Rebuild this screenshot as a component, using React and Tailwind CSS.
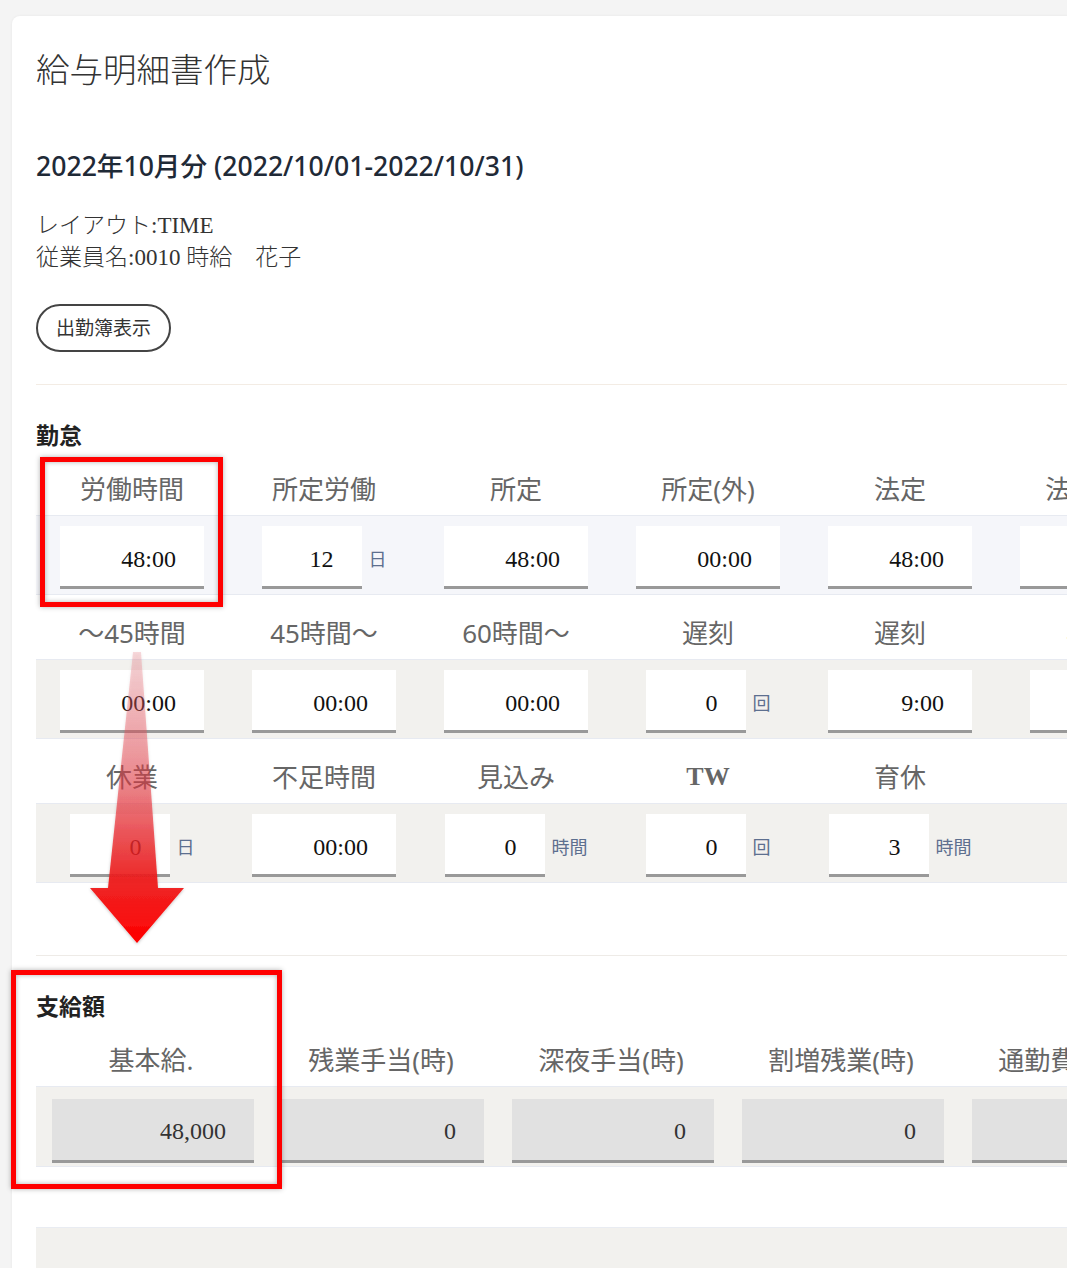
const SANS = "font-['Noto_Sans','Noto_Sans_CJK_JP',sans-serif]";
const SERIF = "font-['Liberation_Serif','Noto_Sans_CJK_JP',serif]";

const attendance = [
  {
    bg: "bg-[#f5f6fa]",
    cells: [
      { label: "労働時間", value: "48:00" },
      { label: "所定労働", value: "12", unit: "日" },
      { label: "所定", value: "48:00" },
      { label: "所定(外)", value: "00:00" },
      { label: "法定", value: "48:00" },
      { label: "法定(外)", value: "00:00" },
    ],
  },
  {
    bg: "bg-[#f2f1ee]",
    cells: [
      { label: "～45時間", value: "00:00" },
      { label: "45時間～", value: "00:00" },
      { label: "60時間～", value: "00:00" },
      { label: "遅刻", value: "0", unit: "回" },
      { label: "遅刻", value: "9:00" },
      { label: "早退", value: "0", unit: "回" },
    ],
  },
  {
    bg: "bg-[#f2f1ee]",
    cells: [
      { label: "休業", value: "0", unit: "日" },
      { label: "不足時間", value: "00:00" },
      { label: "見込み", value: "0", unit: "時間" },
      { label: "TW", value: "0", unit: "回", serifLabel: true },
      { label: "育休", value: "3", unit: "時間" },
    ],
  },
];

const payments = [
  { label: "基本給.", value: "48,000" },
  { label: "残業手当(時)", value: "0" },
  { label: "深夜手当(時)", value: "0" },
  { label: "割増残業(時)", value: "0" },
  { label: "通勤費(課税)", value: "0" },
];

function ValueBox({ value, narrow }) {
  return (
    <div
      className={`${narrow ? "w-[100px]" : "w-[144px]"} flex h-[63px] items-center justify-end border-b-[3px] border-[#999] bg-white pr-7 pt-[6px] ${SERIF} text-[24px] text-[#111]`}
    >
      {value}
    </div>
  );
}

function AttendanceRow({ row }) {
  return (
    <div>
      <div className="flex h-[64px]">
        {row.cells.map((c, i) => (
          <div
            key={i}
            className={`w-[192px] shrink-0 pt-[23px] text-center text-[26px] leading-[30px] text-[#666] ${
              c.serifLabel ? "font-['Liberation_Serif',serif] font-bold" : SANS
            }`}
          >
            {c.label}
          </div>
        ))}
      </div>
      <div className={`flex h-[80px] border-y border-[#e7eaf1] pt-[10px] ${row.bg}`}>
        {row.cells.map((c, i) => (
          <div key={i} className="flex w-[192px] shrink-0 items-start justify-center">
            {c.unit ? (
              <div className="flex items-center gap-[7px]">
                <ValueBox value={c.value} narrow />
                <span className={`${SANS} pt-[4px] text-[18px] text-[#5d6f8f]`}>{c.unit}</span>
              </div>
            ) : (
              <ValueBox value={c.value} />
            )}
          </div>
        ))}
      </div>
    </div>
  );
}

function Arrow() {
  return (
    <svg
      className="pointer-events-none absolute left-[80px] top-[640px]"
      width="120"
      height="310"
      viewBox="0 0 120 310"
    >
      <defs>
        <linearGradient id="shaft" x1="0" y1="12" x2="0" y2="303" gradientUnits="userSpaceOnUse">
          <stop offset="0" stopColor="#e8707a" stopOpacity="0.25" />
          <stop offset="0.45" stopColor="#e83a44" stopOpacity="0.55" />
          <stop offset="0.78" stopColor="#ee1a1a" stopOpacity="0.92" />
          <stop offset="1" stopColor="#ff0000" stopOpacity="1" />
        </linearGradient>
        <filter id="sh" x="-20%" y="-10%" width="140%" height="120%">
          <feDropShadow dx="0" dy="1" stdDeviation="1.5" floodColor="#000" floodOpacity="0.25" />
        </filter>
      </defs>
      <polygon
        points="53,12 61,12 78,248 104,248 57,303 10,248 28,248"
        fill="url(#shaft)"
        filter="url(#sh)"
      />
    </svg>
  );
}

export default function App() {
  return (
    <div className="relative h-[1268px] w-[1067px] overflow-hidden bg-[#f4f4f4]">
      <div className="ml-3 mt-4 w-[1300px] rounded-lg bg-white pl-6 pt-[29px] pb-20 shadow-[0_0_3px_rgba(0,0,0,0.06)]">
        <h1 className={`${SANS} text-[33.5px] font-light leading-[48px] text-[#333]`}>給与明細書作成</h1>
        <h2 className={`${SANS} mt-[53px] text-[26.6px] font-medium leading-[40px] text-[#1f2a37]`}>
          2022年10月分 (2022/10/01-2022/10/31)
        </h2>
        <div className={`${SERIF} mt-[24px] text-[23px] font-light leading-[32px] text-[#333]`}>
          <div>レイアウト:TIME</div>
          <div>従業員名:0010 時給　花子</div>
        </div>
        <button
          className={`${SANS} mt-[30px] flex h-[48px] items-center rounded-full border-2 border-[#444] px-[18px] text-[19px] text-[#333]`}
        >
          出勤簿表示
        </button>

        <div className="mt-[32px] h-px bg-[#f3ece4]" />

        <div className={`${SANS} mt-[35px] text-[23px] font-bold leading-[30px] text-[#222]`}>勤怠</div>
        <div className="mt-px">
          {attendance.map((row, i) => (
            <AttendanceRow key={i} row={row} />
          ))}
        </div>

        <div className="mt-[72px] h-px bg-[#eeebe7]" />

        <div className={`${SANS} mt-[35px] text-[23px] font-bold leading-[30px] text-[#222]`}>支給額</div>
        <div className="mt-px">
          <div className="flex h-[64px]">
            {payments.map((p, i) => (
              <div
                key={i}
                className={`${SANS} w-[230px] shrink-0 pt-[23px] text-center text-[26px] leading-[30px] text-[#666]`}
              >
                {p.label}
              </div>
            ))}
          </div>
          <div className="flex h-[81px] border-y border-[#e7eaf1] bg-[#f2f1ee] pt-3">
            {payments.map((p, i) => (
              <div key={i} className="w-[230px] shrink-0 pl-4">
                <div
                  className={`flex h-[64px] w-[202px] items-center justify-end border-b-[3px] border-[#999] bg-[#e1e1e1] pr-7 pt-[2px] ${SERIF} text-[24px] text-[#333]`}
                >
                  {p.value}
                </div>
              </div>
            ))}
          </div>
        </div>

        <div className="mt-[60px] h-[120px] border-t border-[#e9ecf2] bg-[#f2f1ee]" />
      </div>

      {/* annotation overlays */}
      <div className="pointer-events-none absolute left-[40px] top-[457px] h-[150px] w-[183px] border-[5px] border-[#ff0000] shadow-[0_0_5px_rgba(0,0,0,0.3),inset_0_0_5px_rgba(0,0,0,0.3)]" />
      <div className="pointer-events-none absolute left-[11px] top-[970px] h-[219px] w-[271px] border-[5px] border-[#ff0000] shadow-[0_0_5px_rgba(0,0,0,0.3),inset_0_0_5px_rgba(0,0,0,0.3)]" />
      <Arrow />
    </div>
  );
}
